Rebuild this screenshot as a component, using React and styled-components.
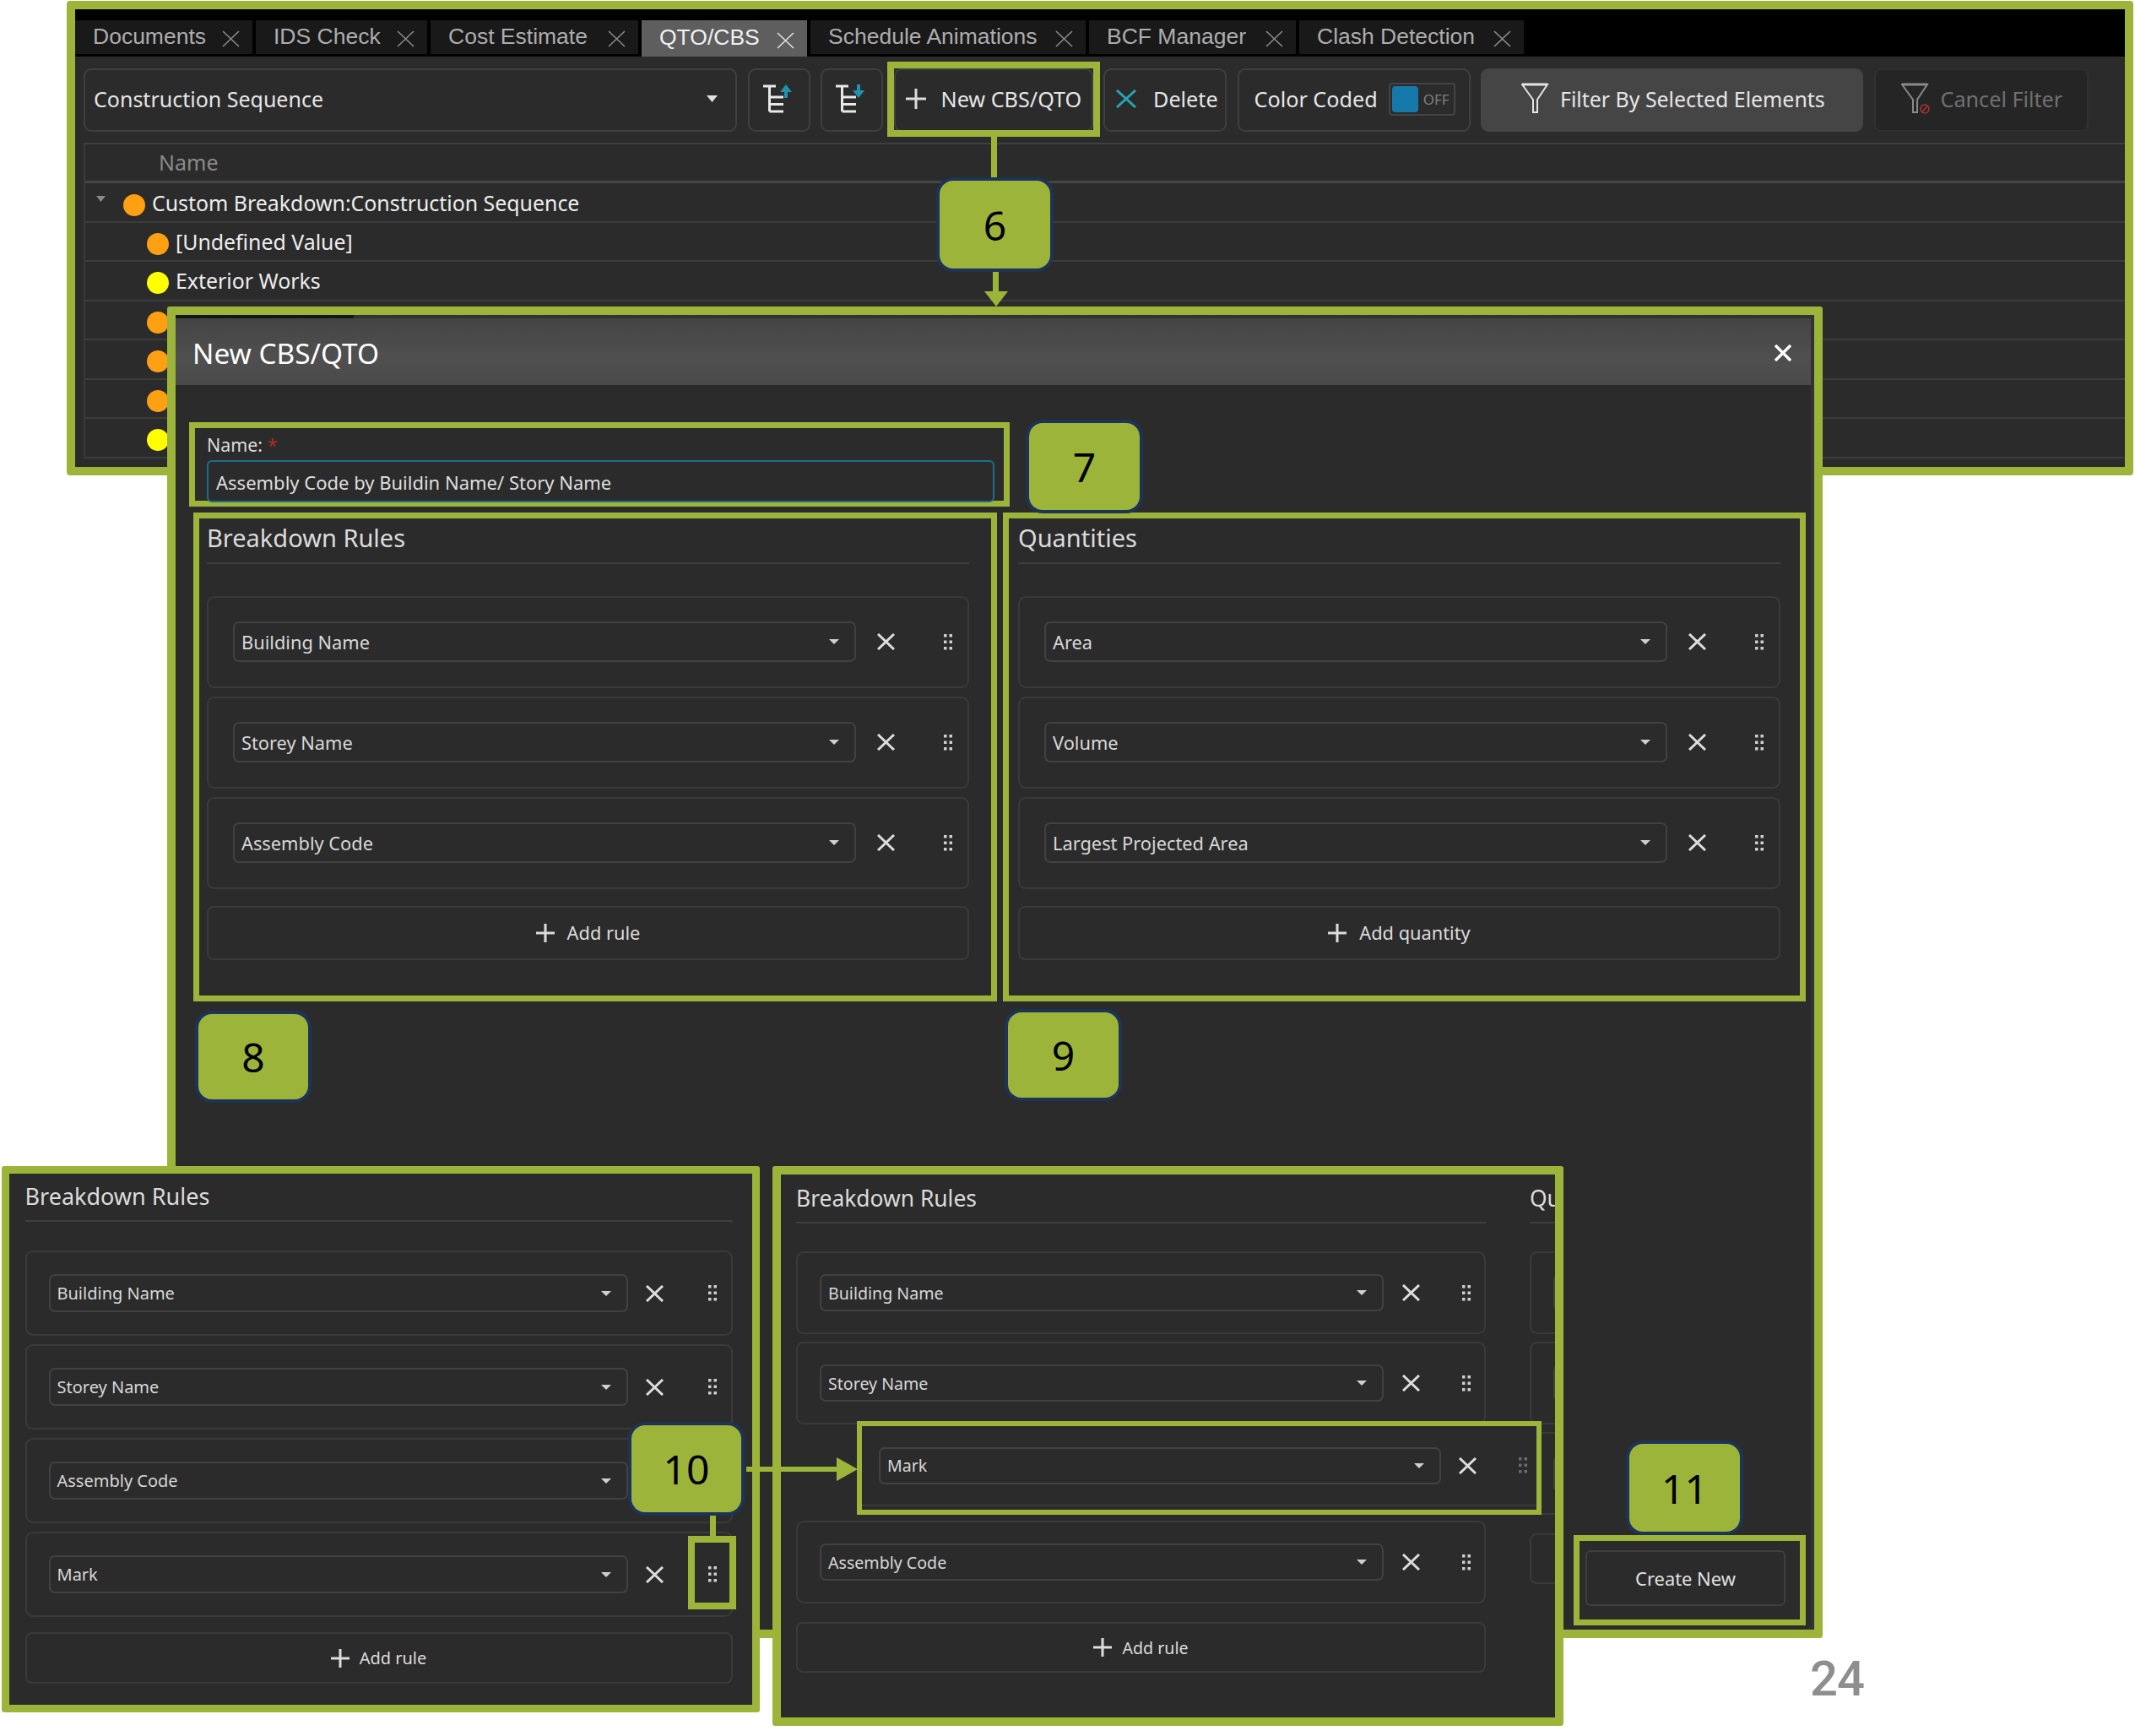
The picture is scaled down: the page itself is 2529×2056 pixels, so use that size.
import React from 'react';
import styled, { createGlobalStyle } from 'styled-components';

const GREEN = '#9db43a';
const PANEL = '#2b2b2b';
const SEGOE = '"Noto Sans", "Open Sans", sans-serif';

const Global = createGlobalStyle`
  html, body { margin: 0; padding: 0; background: #fff; }
  * { box-sizing: border-box; }
`;

const Page = styled.div`
  position: relative;
  width: 2529px;
  height: 2056px;
  overflow: hidden;
  background: #fff;
  font-family: ${SEGOE};
`;

/* ---------- drawings ---------- */
const Cross = ({ w = 21, h = 20, sw = 3, color = '#ddd' }) => (
  <svg width={w} height={h} viewBox={`0 0 ${w} ${h}`} style={{ flex: 'none' }}>
    <path d={`M1 1 L${w - 1} ${h - 1} M${w - 1} 1 L1 ${h - 1}`} stroke={color} strokeWidth={sw} fill="none" />
  </svg>
);
const Plus = ({ size = 22, sw = 3, color = '#ddd' }) => (
  <svg width={size} height={size} viewBox={`0 0 ${size} ${size}`} style={{ flex: 'none' }}>
    <path d={`M${size / 2} 0 V${size} M0 ${size / 2} H${size}`} stroke={color} strokeWidth={sw} fill="none" />
  </svg>
);
const Grip = ({ color = '#cfcfcf' }) => (
  <svg width="10" height="19" viewBox="0 0 10 19">
    {[0, 7.5, 15].map((y) => [0, 6.5].map((x) => <rect key={`${x}-${y}`} x={x} y={y} width="3.5" height="3.5" fill={color} />))}
  </svg>
);
const Caret = ({ color = '#d0d0d0', w = 12, h = 6 }) => (
  <svg width={w} height={h} viewBox={`0 0 ${w} ${h}`} style={{ flex: 'none' }}>
    <path d={`M0 0 H${w} L${w / 2} ${h} Z`} fill={color} />
  </svg>
);
const TreeIcon = ({ down }) => (
  <svg width="38" height="34" viewBox="0 0 38 34">
    <path d="M0 2 H15 M7.5 2 V32 M7.5 15 H24 M7.5 23.5 H24 M7.5 32 H24" stroke="#e8e8e8" strokeWidth="3" fill="none" />
    {down ? (
      <>
        <path d="M27 0 V10" stroke="#1f93ad" strokeWidth="4" />
        <path d="M20 7 L27 16 L34 7 Z" fill="#1f93ad" />
      </>
    ) : (
      <>
        <path d="M27 6 V16" stroke="#1f93ad" strokeWidth="4" />
        <path d="M20 9 L27 0 L34 9 Z" fill="#1f93ad" />
      </>
    )}
  </svg>
);
const Funnel = ({ color = '#e4e4e4', forbidden }) => (
  <svg width="38" height="38" viewBox="0 0 38 38" style={{ flex: 'none' }}>
    <path d="M1 2 H31 L19 20 V35 H14 V20 Z" stroke={color} strokeWidth="2" fill="none" />
    <path d="M1 2 H31" stroke={color} strokeWidth="3" />
    {forbidden && (
      <g stroke="#a33" strokeWidth="1.6" fill="none">
        <circle cx="28" cy="31" r="5" />
        <path d="M24.5 35 L31.5 27" />
      </g>
    )}
  </svg>
);

/* ---------- top window ---------- */
const TopWindow = styled.section`
  position: absolute;
  left: 79px;
  top: 1px;
  width: 2448px;
  height: 562px;
  border: 10px solid ${GREEN};
  border-radius: 4px;
  background: ${PANEL};
  overflow: hidden;
`;
const TabBar = styled.div`
  display: flex;
  align-items: flex-start;
  gap: 4px;
  height: 56px;
  padding-top: 13px;
  background: #000;
`;
const Tab = styled.div`
  display: flex;
  align-items: center;
  width: ${(p) => p.$w}px;
  height: ${(p) => (p.$active ? 43 : 40)}px;
  padding: 0 15px 2px 21px;
  background: ${(p) => (p.$active ? '#5e5e5e' : '#191919')};
  color: ${(p) => (p.$active ? '#f0f0f0' : '#adadad')};
  font: 26.5px "Liberation Sans", Arial, sans-serif;
  white-space: nowrap;
  & > svg { margin-left: auto; margin-top: 6px; }
`;
const Toolbar = styled.div`
  display: flex;
  gap: 12.5px;
  height: 102px;
  padding: 14px 0 0 10px;
`;
const ToolSelect = styled.div`
  display: flex;
  align-items: center;
  justify-content: space-between;
  width: 774px;
  height: 75px;
  padding: 0 21px 4px 10px;
  border: 2px solid #3f3f3f;
  border-radius: 9px;
  color: #e6e6e6;
  font-size: 25px;
`;
const ToolButton = styled.div`
  display: flex;
  align-items: center;
  justify-content: ${(p) => (p.$center ? 'center' : 'flex-start')};
  gap: ${(p) => p.$gap || 0}px;
  width: ${(p) => p.$w}px;
  height: 75px;
  padding: 0 0 3px ${(p) => p.$pl || 0}px;
  border: 2px solid ${(p) => (p.$filled ? '#454545' : p.$muted ? '#303030' : '#3f3f3f')};
  border-radius: 9px;
  background: ${(p) => (p.$filled ? '#454545' : p.$muted ? '#252525' : 'transparent')};
  color: ${(p) => (p.$muted ? '#707070' : '#e6e6e6')};
  font-size: ${(p) => p.$fs || 25.2}px;
  white-space: nowrap;
`;
const Toggle = styled.div`
  display: flex;
  align-items: center;
  gap: 6px;
  width: 79px;
  height: 39px;
  padding: 2px;
  border: 2px solid #444;
  border-radius: 4px;
  color: #7f7f7f;
  font-size: 17px;
  & > i { width: 31px; height: 31px; background: #1479a8; border-radius: 4px; }
`;
const Table = styled.div`
  margin-left: 10px;
  border-left: 2px solid #3a3a3a;
  border-top: 2px solid #3f3f3f;
`;
const TableHead = styled.div`
  height: 46px;
  padding: 4px 0 0 87px;
  border-bottom: 3px solid #454545;
  color: #8a8a8a;
  font-size: 25px;
`;
const TreeRow = styled.div`
  display: flex;
  align-items: center;
  height: 46.5px;
  padding: ${(p) => (p.$root ? '1px 0 0 13px' : '0 0 0 73px')};
  border-bottom: 2px solid #3c3c3c;
  color: #ededed;
  font-size: 24.9px;
  white-space: nowrap;
`;
const Expander = styled.span`
  display: flex;
  width: 32px;
  margin-top: -8px;
`;
const Dot = styled.span`
  flex: none;
  width: 26px;
  height: 26px;
  margin: 6px 8px 0 0;
  border-radius: 50%;
  background: ${(p) => p.$color};
`;

/* ---------- dialog ---------- */
const DialogFrame = styled.section`
  position: absolute;
  left: 198px;
  top: 363px;
  width: 1961px;
  height: 1577px;
  padding: 4px 4px 0 0;
  border: 10.5px solid ${GREEN};
  border-radius: 3px;
  background: #333;
`;
const Sliver = styled.i`
  position: absolute;
  left: 0;
  top: 0;
  width: 211px;
  height: 4px;
  background: #161616;
`;
const Dialog = styled.div`
  display: flex;
  flex-direction: column;
  height: 100%;
  background: ${PANEL};
  border-radius: 0 0 8px 0;
`;
const DialogTitle = styled.header`
  display: flex;
  align-items: center;
  justify-content: space-between;
  flex: none;
  height: 79px;
  padding: 2px 23px 0 20px;
  background: linear-gradient(#444, #4f4f4f 55%, #4b4b4b);
  color: #fff;
  font-size: 33.4px;
`;
const DialogBody = styled.div`
  display: flex;
  flex-direction: column;
  flex: 1;
  padding: 44px 6px 5px 16px;
`;
const NameLine = styled.div`
  display: flex;
  align-items: flex-start;
  gap: 23px;
`;
const NameBox = styled.div`
  width: 972px;
  height: 100px;
  padding: 0 0 0 14px;
  border: 7px solid ${GREEN};
`;
const NameLabel = styled.div`
  height: 38px;
  line-height: 40px;
  color: #dcdcdc;
  font-size: 21.4px;
  & > b { color: #b02a2a; font-weight: 400; }
`;
const NameInput = styled.div`
  display: flex;
  align-items: center;
  width: 933px;
  height: 50px;
  padding: 1px 0 0 9px;
  border: 2px solid #1c6f8c;
  border-radius: 6px;
  color: #dedede;
  font-size: 22px;
`;
const SectionRow = styled.div`
  display: flex;
  gap: 7px;
  margin: 7px 0 0 5px;
`;
const Section = styled.div`
  width: ${(p) => p.$w}px;
  height: 579px;
  padding-left: ${(p) => p.$pl}px;
  border: 7px solid ${GREEN};
`;
const CreateBox = styled.div`
  align-self: flex-end;
  width: 275px;
  height: 107px;
  margin-top: auto;
  padding: 11px 17px 16px 7px;
  border: 7px solid ${GREEN};
`;
const CreateButton = styled.div`
  display: flex;
  align-items: center;
  justify-content: center;
  height: 100%;
  padding-top: 1px;
  border: 2px solid #3f3f3f;
  border-radius: 6px;
  color: #e0e0e0;
  font-size: 21.9px;
`;

/* ---------- rule lists ---------- */
const SIZE = {
  dialog: { w: 903, titleH: 52, titleLh: 45, titleFs: 29, stackMt: 40, cardH: 108.5, gap: 10.5, pl: 29, selH: 48, xw: 70, ml: 16, gw: 46, fs: 21.8, addMt: 20, addH: 64, addGap: 15 },
  left: { w: 838, titleH: 55, titleLh: 54, titleFs: 27, stackMt: 36, cardH: 101, gap: 10, pl: 26, selH: 45, xw: 64, ml: 14, gw: 44, fs: 20, addMt: 18, addH: 61, addGap: 12 },
  right: { w: 817, titleH: 56, titleLh: 56, titleFs: 26.4, stackMt: 35, cardH: 98, gap: 9, pl: 26, selH: 44, xw: 64, ml: 13, gw: 42, fs: 19.6, addMt: 22, addH: 60, addGap: 12 },
  ghost: { w: 793, cardH: 93, pl: 18, selH: 44, xw: 62, ml: 27, gw: 16, fs: 19.6 },
};

const RuleColumn = styled.div`
  flex: none;
  width: ${(p) => p.$s.w}px;
  color: #dcdcdc;
`;
const RuleTitle = styled.div`
  height: ${(p) => p.$s.titleH + 2}px;
  line-height: ${(p) => p.$s.titleLh}px;
  border-bottom: 2px solid #3e3e3e;
  font-size: ${(p) => p.$s.titleFs}px;
`;
const RuleStack = styled.div`
  display: flex;
  flex-direction: column;
  gap: ${(p) => p.$s.gap}px;
  margin-top: ${(p) => p.$s.stackMt - 2}px;
`;
const RuleCardBox = styled.div`
  display: flex;
  align-items: center;
  flex: none;
  width: ${(p) => p.$s.w}px;
  height: ${(p) => p.$s.cardH}px;
  padding-left: ${(p) => p.$s.pl}px;
  border: 2px solid #3a3a3a;
  border-radius: 9px;
`;
const RuleSelect = styled.div`
  display: flex;
  align-items: center;
  justify-content: space-between;
  flex: 1;
  height: ${(p) => p.$s.selH}px;
  padding: 0 18px 0 8px;
  border: 2px solid #414141;
  border-radius: 7px;
  color: #d8d8d8;
  font-size: ${(p) => p.$s.fs}px;
`;
const RemoveCell = styled.div`
  display: flex;
  justify-content: center;
  flex: none;
  width: ${(p) => p.$s.xw}px;
`;
const GripCell = styled.div`
  display: flex;
  justify-content: center;
  flex: none;
  width: ${(p) => p.$s.gw}px;
  margin-left: ${(p) => p.$s.ml}px;
`;
const Spacer = styled.div`
  flex: none;
  height: ${(p) => p.$h}px;
`;
const AddButton = styled.div`
  display: flex;
  align-items: center;
  justify-content: center;
  gap: ${(p) => p.$s.addGap}px;
  height: ${(p) => p.$s.addH}px;
  margin-top: ${(p) => p.$s.addMt}px;
  border: 2px solid #3a3a3a;
  border-radius: 8px;
  color: #dcdcdc;
  font-size: ${(p) => p.$s.fs}px;
`;
const ClippedColumn = styled.div`
  flex: none;
  width: 30px;
  overflow: hidden;
  white-space: nowrap;
  & > div { width: ${(p) => p.$s.w}px; }
`;

const RuleCard = ({ s, label, gripColor }) => (
  <RuleCardBox $s={s}>
    <RuleSelect $s={s}>
      <span>{label}</span>
      <Caret />
    </RuleSelect>
    <RemoveCell $s={s}><Cross /></RemoveCell>
    <GripCell $s={s}><Grip color={gripColor} /></GripCell>
  </RuleCardBox>
);

const RuleList = ({ s, title, items, add }) => (
  <RuleColumn $s={s}>
    <RuleTitle $s={s}>{title}</RuleTitle>
    <RuleStack $s={s}>
      {items.map((it, i) =>
        it === null ? <Spacer key={i} $h={s.cardH - 2} /> : <RuleCard key={i} s={s} label={it} />
      )}
    </RuleStack>
    <AddButton $s={s}><Plus />{add}</AddButton>
  </RuleColumn>
);

/* ---------- lower collage panels ---------- */
const LowerLeft = styled.section`
  position: absolute;
  left: 2px;
  top: 1381px;
  width: 898px;
  height: 647px;
  padding-left: 18.5px;
  border: 9.5px solid ${GREEN};
  border-radius: 3px;
  background: ${PANEL};
`;
const LowerRight = styled.section`
  position: absolute;
  left: 915px;
  top: 1381px;
  width: 937px;
  height: 663px;
  display: flex;
  gap: 52px;
  padding-left: 18px;
  border: 10px solid ${GREEN};
  border-radius: 3px;
  background: ${PANEL};
  overflow: hidden;
`;
const MarkBox = styled.div`
  position: absolute;
  left: 1015px;
  top: 1683px;
  width: 811px;
  height: 111px;
  border: 6.5px solid ${GREEN};
  background: ${PANEL};
`;
const Ghost = styled.div`
  border-bottom: 2px solid #3a3a3a;
  & > div { border-color: transparent; border-radius: 0; }
`;

/* ---------- callouts ---------- */
const Badge = styled.div`
  position: absolute;
  left: ${(p) => p.$x}px;
  top: ${(p) => p.$y}px;
  width: ${(p) => p.$w}px;
  height: ${(p) => p.$h}px;
  display: flex;
  align-items: center;
  justify-content: center;
  background: ${GREEN};
  border-radius: 16px;
  box-shadow: 0 0 0 4px #1d3358;
  color: #000;
  font-size: 48px;
`;
const Line = styled.i`
  position: absolute;
  left: ${(p) => p.$x}px;
  top: ${(p) => p.$y}px;
  width: ${(p) => p.$w}px;
  height: ${(p) => p.$h}px;
  background: ${GREEN};
`;
const HeadDown = styled.i`
  position: absolute;
  left: 1166px;
  top: 345px;
  border-left: 14px solid transparent;
  border-right: 14px solid transparent;
  border-top: 18px solid ${GREEN};
`;
const HeadRight = styled.i`
  position: absolute;
  left: 991px;
  top: 1726px;
  border-top: 14px solid transparent;
  border-bottom: 14px solid transparent;
  border-left: 25px solid ${GREEN};
`;
const Frame = styled.i`
  position: absolute;
  left: ${(p) => p.$x}px;
  top: ${(p) => p.$y}px;
  width: ${(p) => p.$w}px;
  height: ${(p) => p.$h}px;
  border: 8px solid ${GREEN};
`;
const PageNumber = styled.div`
  position: absolute;
  left: 2144px;
  top: 1954px;
  color: #8e8e8e;
  font: 500 58px/68px Roboto, sans-serif;
  letter-spacing: -1px;
`;

const TABS = [
  ['Documents', 210],
  ['IDS Check', 203],
  ['Cost Estimate', 246],
  ['QTO/CBS', 196, true],
  ['Schedule Animations', 326],
  ['BCF Manager', 245],
  ['Clash Detection', 266],
];
const ROWS = [
  { color: '#ff9f12', label: '[Undefined Value]' },
  { color: '#ffff00', label: 'Exterior Works' },
  { color: '#ff9f12' },
  { color: '#ff9f12' },
  { color: '#ff9f12' },
  { color: '#ffff00' },
];
const BASE = ['Building Name', 'Storey Name'];

export default function App() {
  return (
    <Page>
      <Global />

      <TopWindow>
        <TabBar>
          {TABS.map(([t, w, active]) => (
            <Tab key={t} $w={w} $active={active}>
              {t}
              <Cross sw={1.6} color={active ? '#e0e0e0' : '#8a8a8a'} />
            </Tab>
          ))}
        </TabBar>
        <Toolbar>
          <ToolSelect>
            Construction Sequence
            <Caret w={13} h={8} color="#e0e0e0" />
          </ToolSelect>
          <ToolButton $w={74} $center><TreeIcon /></ToolButton>
          <ToolButton $w={74} $center><TreeIcon down /></ToolButton>
          <ToolButton $w={236} $pl={12} $gap={18}><Plus size={24} />New CBS/QTO</ToolButton>
          <ToolButton $w={146} $pl={13} $gap={20}><Cross w={24} h={22} color="#25a5b5" />Delete</ToolButton>
          <ToolButton $w={276} $pl={18} $gap={13}>
            Color Coded
            <Toggle><i />OFF</Toggle>
          </ToolButton>
          <ToolButton $filled $w={453} $pl={46} $gap={8} $fs={24.9}><Funnel />Filter By Selected Elements</ToolButton>
          <ToolButton $muted $w={254} $pl={30} $gap={9}><Funnel color="#8a8a8a" forbidden />Cancel Filter</ToolButton>
        </Toolbar>
        <Table>
          <TableHead>Name</TableHead>
          <TreeRow $root>
            <Expander><Caret w={11} h={7} color="#8a8a8a" /></Expander>
            <Dot $color="#ff9f12" />
            Custom Breakdown:Construction Sequence
          </TreeRow>
          {ROWS.map((r, i) => (
            <TreeRow key={i}>
              <Dot $color={r.color} />
              {r.label}
            </TreeRow>
          ))}
        </Table>
      </TopWindow>

      <DialogFrame>
        <Sliver />
        <Dialog>
          <DialogTitle>
            New CBS/QTO
            <Cross w={20} h={20} sw={3.4} color="#fff" />
          </DialogTitle>
          <DialogBody>
            <NameLine>
              <NameBox>
                <NameLabel>Name: <b>*</b></NameLabel>
                <NameInput>Assembly Code by Buildin Name/ Story Name</NameInput>
              </NameBox>
            </NameLine>
            <SectionRow>
              <Section $w={952} $pl={9}>
                <RuleList s={SIZE.dialog} title="Breakdown Rules" items={[...BASE, 'Assembly Code']} add="Add rule" />
              </Section>
              <Section $w={951} $pl={11}>
                <RuleList s={SIZE.dialog} title="Quantities" items={['Area', 'Volume', 'Largest Projected Area']} add="Add quantity" />
              </Section>
            </SectionRow>
            <CreateBox>
              <CreateButton>Create New</CreateButton>
            </CreateBox>
          </DialogBody>
        </Dialog>
      </DialogFrame>

      <LowerLeft>
        <RuleList s={SIZE.left} title="Breakdown Rules" items={[...BASE, 'Assembly Code', 'Mark']} add="Add rule" />
      </LowerLeft>
      <LowerRight>
        <RuleList s={SIZE.right} title="Breakdown Rules" items={[...BASE, null, 'Assembly Code']} add="Add rule" />
        <ClippedColumn $s={SIZE.right}>
          <RuleList s={SIZE.right} title="Quantities" items={['', '', '']} add="" />
        </ClippedColumn>
      </LowerRight>
      <MarkBox>
        <Ghost>
          <RuleCard s={SIZE.ghost} label="Mark" gripColor="#6a6a6a" />
        </Ghost>
      </MarkBox>

      {/* annotations */}
      <Frame $x={1051} $y={73} $w={252} $h={89} />
      <Line $x={1174} $y={162} $w={7} $h={55} />
      <Badge $x={1113} $y={214} $w={131} $h={104}>6</Badge>
      <Line $x={1176} $y={322} $w={7} $h={26} />
      <HeadDown />
      <Badge $x={1219} $y={501} $w={131} $h={103}>7</Badge>
      <Badge $x={235} $y={1201} $w={130} $h={101}>8</Badge>
      <Badge $x={1194} $y={1199} $w={131} $h={101}>9</Badge>
      <Frame $x={815} $y={1819} $w={57} $h={87} />
      <Line $x={841} $y={1790} $w={7} $h={30} />
      <Line $x={884} $y={1737} $w={108} $h={6} />
      <HeadRight />
      <Badge $x={748} $y={1688} $w={130} $h={103}>10</Badge>
      <Badge $x={1930} $y={1710} $w={131} $h={104}>11</Badge>
      <PageNumber>24</PageNumber>
    </Page>
  );
}
